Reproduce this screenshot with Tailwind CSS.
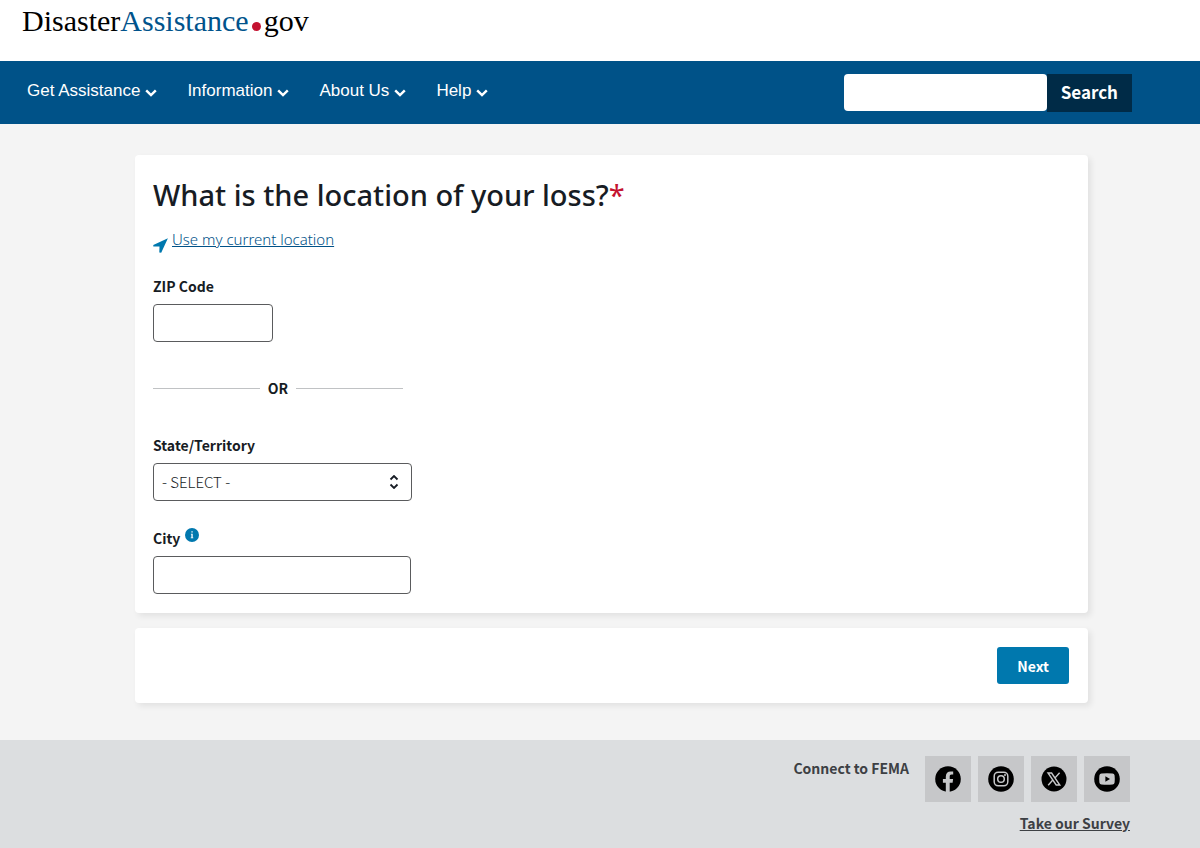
<!DOCTYPE html>
<html lang="en">

<head>
    <meta charset="UTF-8">
    <meta name="viewport" content="width=device-width, initial-scale=1.0">
    <title>DisasterAssistance.gov</title>
    <script src="https://cdn.jsdelivr.net/npm/@tailwindcss/browser@4"></script>
</head>

<body class="flex min-h-screen flex-col bg-[#f4f4f4] font-['Noto_Sans_CJK_SC','Noto_Sans',sans-serif] text-[#171c24]">
    <header>
        <div class="h-[61px] bg-white px-[22px] pt-[3px]">
            <a href="#" class="flex items-baseline font-['Liberation_Serif',serif] text-[30px] leading-9 text-black">
                <span>Disaster</span><span class="text-[#00538c]">Assistance</span>
                <span class="mx-[3px] size-[9px] rounded-full bg-[#c41230]"></span>
                <span>gov</span>
            </a>
        </div>

        <nav class="flex h-[63px] items-center justify-between bg-[#005288] pr-[68px] pl-[27px]">
            <div class="flex gap-[30px] pb-1 font-['Liberation_Sans',Arial,sans-serif] text-[17px] leading-6 text-white">
                <button type="button" class="flex items-center gap-[5px]">
                    Get Assistance
                    <svg class="mt-1 h-[8px] w-[12px]" viewBox="0 0 12 8" fill="none" stroke="currentColor" stroke-width="2.4"><path d="M1.2 1.3 6 6.1l4.8-4.8" /></svg>
                </button>
                <button type="button" class="flex items-center gap-[5px]">
                    Information
                    <svg class="mt-1 h-[8px] w-[12px]" viewBox="0 0 12 8" fill="none" stroke="currentColor" stroke-width="2.4"><path d="M1.2 1.3 6 6.1l4.8-4.8" /></svg>
                </button>
                <button type="button" class="flex items-center gap-[5px]">
                    About Us
                    <svg class="mt-1 h-[8px] w-[12px]" viewBox="0 0 12 8" fill="none" stroke="currentColor" stroke-width="2.4"><path d="M1.2 1.3 6 6.1l4.8-4.8" /></svg>
                </button>
                <button type="button" class="flex items-center gap-[5px]">
                    Help
                    <svg class="mt-1 h-[8px] w-[12px]" viewBox="0 0 12 8" fill="none" stroke="currentColor" stroke-width="2.4"><path d="M1.2 1.3 6 6.1l4.8-4.8" /></svg>
                </button>
            </div>

            <form class="flex items-center">
                <input type="search" aria-label="Search" class="h-[37px] w-[203px] rounded bg-white px-2 text-black">
                <button type="submit" class="h-[38px] bg-[#002b47] px-[14px] pb-[2px] text-[17px] leading-6 font-bold text-white">Search</button>
            </form>
        </nav>
    </header>

    <main class="flex-1 pt-[31px] pr-28 pb-[37px] pl-[135px]">
        <form>
            <section class="rounded bg-white px-[18px] pt-5 pb-[19px] shadow-[3px_3px_6px_rgba(0,0,0,0.08)]">
                <h1 class="font-['Noto_Sans',sans-serif] text-[29px] leading-10 font-medium">What is the location of your loss?<span class="font-normal text-[#c41230]">*</span></h1>

                <div class="mt-[14px] flex gap-1 font-['Noto_Sans',sans-serif] text-[15px] leading-5 font-light">
                    <svg class="mt-[9px] size-[15px] fill-[#0078ae]" viewBox="0 0 15 15"><path d="M14.9.2 8.2 14.8 6.3 14.6 6.5 8.5.3 8.4.3 6.9Z" /></svg>
                    <a href="#" class="text-[#005288] underline">Use my current location</a>
                </div>

                <div class="mt-[23px]">
                    <label for="zip" class="block text-sm leading-5 font-bold">ZIP Code</label>
                    <input id="zip" type="text" class="mt-2 block h-[38px] w-[120px] rounded border border-[#5a5b5d] bg-white px-2">
                </div>

                <div class="mt-9 flex w-[250px] items-center gap-2 text-sm leading-5 font-bold">
                    <span class="h-px flex-1 bg-[#c0c2c4]"></span>
                    OR
                    <span class="h-px flex-1 bg-[#c0c2c4]"></span>
                </div>

                <div class="mt-[37px]">
                    <label for="state" class="block text-sm leading-5 font-bold">State/Territory</label>
                    <div class="relative mt-2 w-[259px]">
                        <select id="state" class="h-[38px] w-full appearance-none rounded border border-[#5a5b5d] bg-white px-2 text-[15px] font-light">
                            <option>- SELECT -</option>
                        </select>
                        <svg class="pointer-events-none absolute top-3 right-[13px] h-[14px] w-[10px]" viewBox="0 0 10 14" fill="none" stroke="#171c24" stroke-width="1.8"><path d="M1.5 4.5 5 1l3.5 3.5M1.5 9.5 5 13l3.5-3.5" /></svg>
                    </div>
                </div>

                <div class="mt-[27px]">
                    <div class="flex gap-[5px]">
                        <label for="city" class="block text-sm leading-5 font-bold">City</label>
                        <button type="button" aria-label="About the city field" class="size-[14px]">
                            <svg class="size-[14px]" viewBox="0 0 14 14"><circle cx="7" cy="7" r="7" fill="#0078ae" /><path d="M6.4 3.3h1.3v1.3H6.4zM5.9 5.700h1.800v3.800h.6v.8H5.700v-.8h.7v-3h-.5z" fill="#fff" /></svg>
                        </button>
                    </div>
                    <input id="city" type="text" class="mt-2 block h-[38px] w-[258px] rounded border border-[#5a5b5d] bg-white px-2">
                </div>
            </section>

            <section class="mt-[15px] flex justify-end rounded bg-white px-[19px] py-[19px] shadow-[3px_3px_6px_rgba(0,0,0,0.08)]">
                <button type="submit" class="h-[37px] rounded-[3px] bg-[#0078ae] px-5 text-sm font-bold text-white">Next</button>
            </section>
        </form>
    </main>

    <footer class="flex flex-col items-end bg-[#dcdee0] pt-4 pr-[70px] pb-[15px] text-sm leading-5 font-bold text-[#3d4044]">
        <div class="flex gap-4">
            <p class="pt-[2px]">Connect to FEMA</p>
            <div class="flex gap-[7px]">
                <a href="#" aria-label="Facebook" class="flex size-[46px] items-center justify-center bg-[#c6c7c9]">
                    <svg class="size-[26px]" viewBox="0 0 26 26"><circle cx="13" cy="13" r="12.8" /><path d="M10.8 26v-9.2H7.9v-3.7h2.9v-2.4c0-3.400 1.900-5.300 4.900-5.300 1.200 0 2.500.2 2.500.2v3h-1.500c-1.500 0-2 .9-2 1.900v2.600h3.400l-.5 3.700h-2.900V26Z" fill="#c6c7c9" /></svg>
                </a>
                <a href="#" aria-label="Instagram" class="flex size-[46px] items-center justify-center bg-[#c6c7c9]">
                    <svg class="size-[26px]" viewBox="0 0 26 26"><circle cx="13" cy="13" r="12.8" /><g fill="none" stroke="#c6c7c9" stroke-width="1.5"><rect x="6.2" y="6.2" width="13.6" height="13.6" rx="4" /><circle cx="13" cy="13" r="3.3" /></g><circle cx="17" cy="9" r="1" fill="#c6c7c9" /></svg>
                </a>
                <a href="#" aria-label="X" class="flex size-[46px] items-center justify-center bg-[#c6c7c9]">
                    <svg class="size-[26px]" viewBox="0 0 26 26"><circle cx="13" cy="13" r="12.5" /><path d="M7 7h3.6l8.2 12h-3.600ZM18.600 6.700l-5 5.700M12 13.800l-4.800 5.500" fill="none" stroke="#c6c7c9" stroke-width="1.4" /></svg>
                </a>
                <a href="#" aria-label="YouTube" class="flex size-[46px] items-center justify-center bg-[#c6c7c9]">
                    <svg class="size-[26px]" viewBox="0 0 26 26"><circle cx="13" cy="13" r="12.8" /><path d="M7.5 7.6q5.5-.6 11 0 1.900.2 2.100 2 .4 3.400 0 6.800-.2 1.800-2.100 2-5.500.6-11 0-1.900-.2-2.100-2-.4-3.400 0-6.800.2-1.800 2.100-2Z" fill="#c6c7c9" /><path d="m11.4 10.3 4.6 2.700-4.600 2.700Z" /></svg>
                </a>
            </div>
        </div>
        <a href="#" class="mt-[11px] underline">Take our Survey</a>
    </footer>
</body>

</html>
